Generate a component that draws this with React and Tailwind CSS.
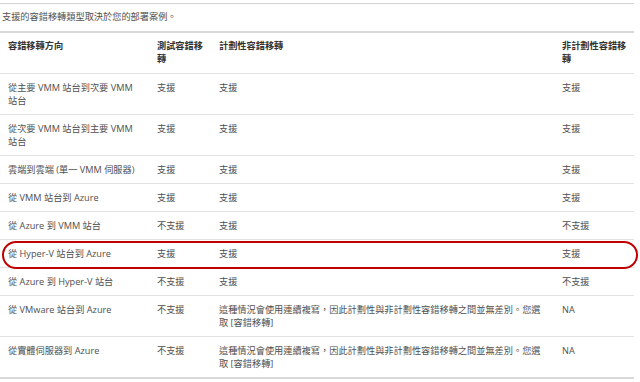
import React from 'react'

const rows = [
  ['從主要 VMM 站台到次要 VMM 站台', '支援', '支援', '支援'],
  ['從次要 VMM 站台到主要 VMM 站台', '支援', '支援', '支援'],
  ['雲端到雲端 (單一 VMM 伺服器)', '支援', '支援', '支援'],
  ['從 VMM 站台到 Azure', '支援', '支援', '支援'],
  ['從 Azure 到 VMM 站台', '不支援', '支援', '不支援'],
  ['從 Hyper-V 站台到 Azure', '支援', '支援', '支援'],
  ['從 Azure 到 Hyper-V 站台', '不支援', '支援', '不支援'],
  ['從 VMware 站台到 Azure', '不支援', '這種情況會使用連續複寫，因此計劃性與非計劃性容錯移轉之間並無差別。您選取 [容錯移轉]', 'NA'],
  ['從實體伺服器到 Azure', '不支援', '這種情況會使用連續複寫，因此計劃性與非計劃性容錯移轉之間並無差別。您選取 [容錯移轉]', 'NA'],
]

const headers = ['容錯移轉方向', '測試容錯移轉', '計劃性容錯移轉', '非計劃性容錯移轉']

export default function App() {
  return (
    <div className="relative w-[640px] h-[382px] bg-white pt-[3px] font-['Open_Sans','Noto_Sans_CJK_TC',sans-serif] text-[9.2px] leading-[13px] text-[#4f4f4f]">
      <div className="w-[634px] border-t border-[#d4d4d4]">
        <p className="pl-[2px] pt-[6px] pb-[8px] leading-[13px]">支援的容錯移轉類型取決於您的部署案例。</p>
      </div>

      <table className="w-[634px] table-fixed border-collapse border-t-2 border-b-2 border-[#d9d9d9]">
        <colgroup>
          <col className="w-[149px]" />
          <col className="w-[62px]" />
          <col className="w-[343px]" />
          <col className="w-[80px]" />
        </colgroup>
        <thead>
          <tr className="border-b border-[#e3e3e3]">
            {headers.map((h, j) => (
              <th key={h} className={`pl-2 pt-[6px] pb-[8px] text-left align-top font-bold text-[#333] ${j === 3 ? 'pr-[4px]' : 'pr-2'}`}>
                {h}
              </th>
            ))}
          </tr>
        </thead>
        <tbody>
          {rows.map((r, i) => (
            <tr key={i} className={i < rows.length - 1 ? 'border-b border-[#e3e3e3]' : ''}>
              {r.map((c, j) => (
                <td key={j} className={`pl-2 pt-[7px] pb-[7px] align-top ${j === 3 ? 'pr-[4px]' : 'pr-2'}`}>
                  {c}
                </td>
              ))}
            </tr>
          ))}
        </tbody>
      </table>

      {/* highlight around the Hyper-V row */}
      <div className="absolute left-[2px] top-[241px] w-[636px] h-[28px] rounded-[14px] border-2 border-[#c00000] pointer-events-none" />
    </div>
  )
}
